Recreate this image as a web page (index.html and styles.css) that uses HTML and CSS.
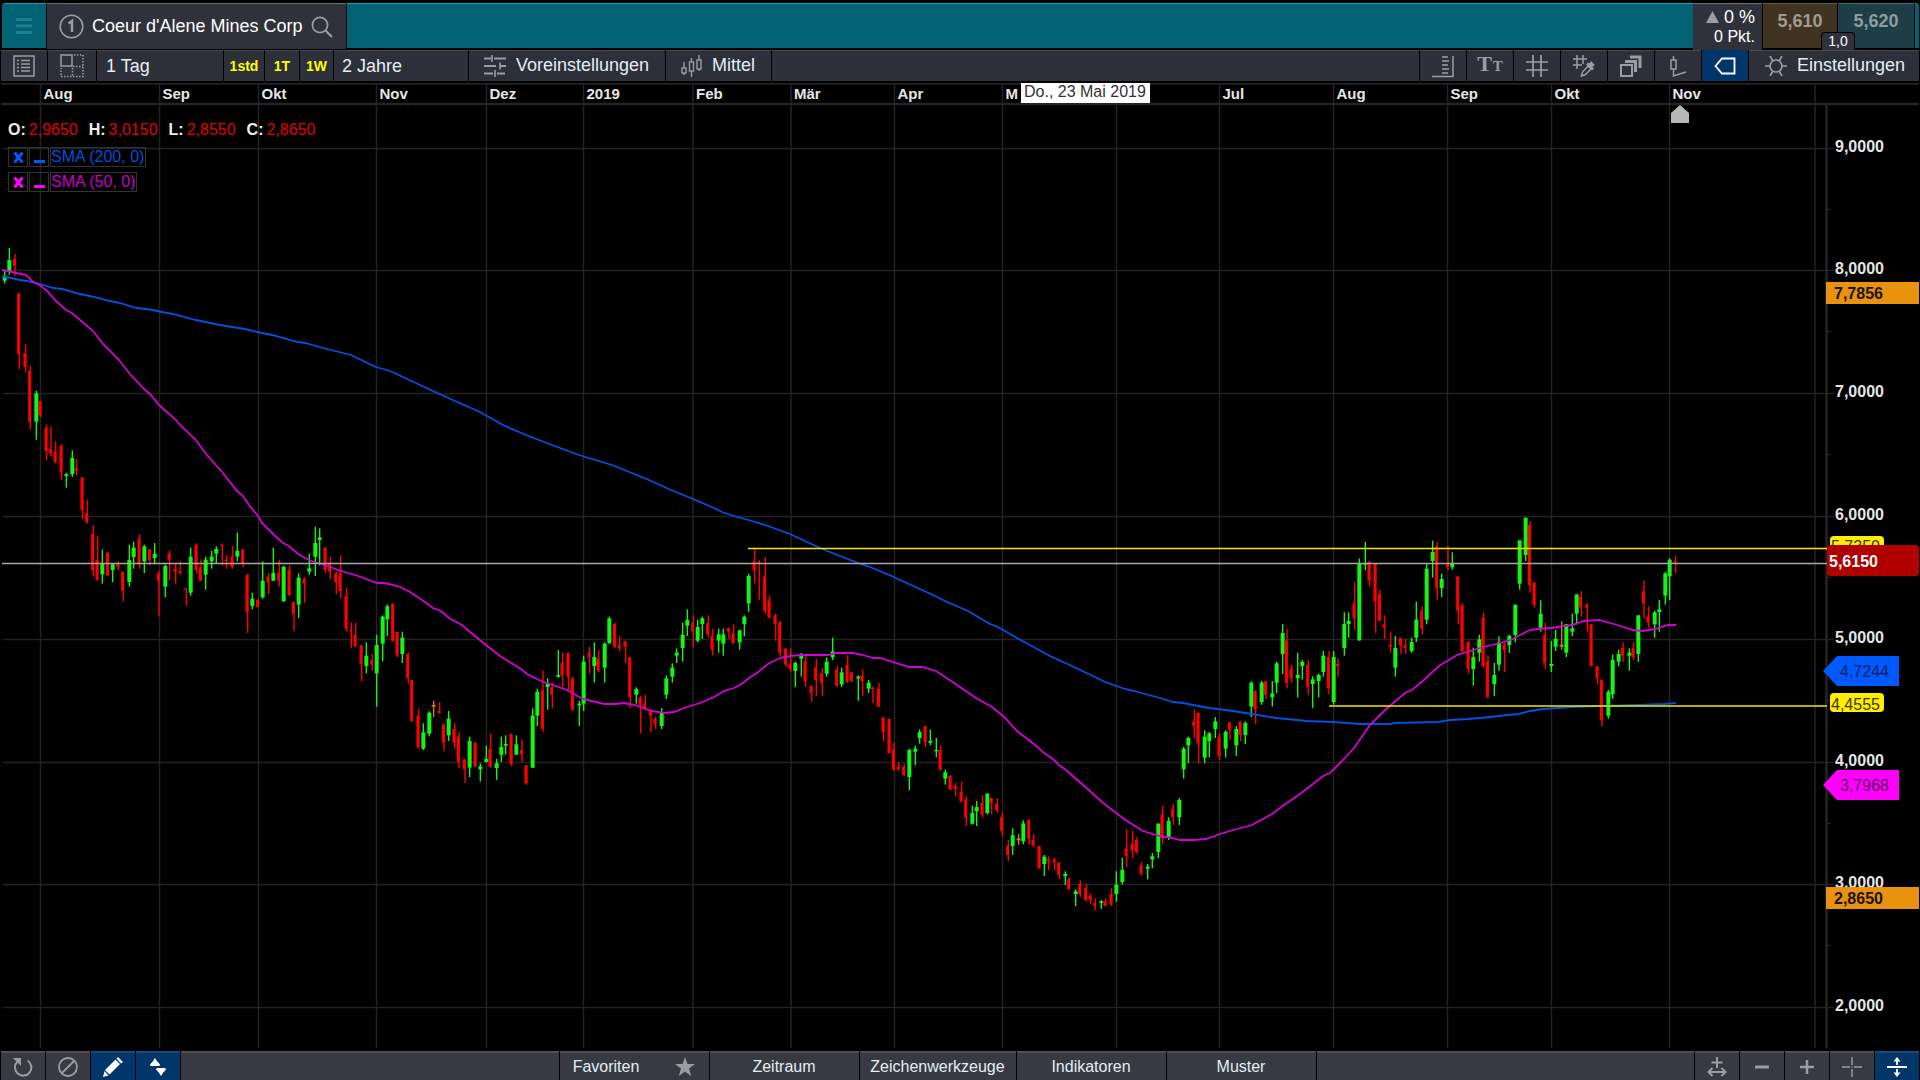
FILE: index.html
```html
<!DOCTYPE html>
<html lang="de">

<head>
    <meta charset="utf-8">
    <title>Coeur d'Alene Mines Corp</title>
    <link rel="stylesheet" href="styles.css">
</head>

<body>
    <header class="titlebar">
        <button class="menu" aria-label="Menü">
            <svg width="16" height="16" viewBox="0 0 16 16"><path d="M0 1.500H16M0 8H16M0 14.500H16" stroke="#1e7f8f" stroke-width="3"/></svg>
        </button>
        <button class="instrument">
            <svg width="25" height="25" viewBox="0 0 25 25" fill="none" stroke="#9a9da1"><circle cx="12.500" cy="12.500" r="11.300" stroke-width="1.600"/><path d="M9.500 9.500L13 7V18" stroke-width="2.500"/></svg>
            <span>Coeur d'Alene Mines Corp</span>
            <svg width="22" height="22" viewBox="0 0 22 22" fill="none" stroke="#9a9da1" stroke-width="1.700"><circle cx="9" cy="9" r="7.600"/><path d="M14.500 14.500L21 21" stroke-width="2.200"/></svg>
        </button>
        <div class="brand"></div>
        <div class="change">
            <div><svg width="13" height="12" viewBox="0 0 13 12"><path d="M6.500 0L13 12H0Z" fill="#9a9da1"/></svg> 0 %</div>
            <div class="points">0 Pkt.</div>
        </div>
        <div class="quote">
            <button class="bid">5,610</button>
            <button class="ask">5,620</button>
            <span class="spread">1,0</span>
        </div>
        <div class="edge"></div>
    </header>

    <nav class="toolbar">
        <button class="icon" aria-label="Liste">
            <svg width="22" height="22" viewBox="0 0 22 22" fill="none" stroke="#9a9da1" stroke-width="1.500"><rect x="1" y="1" width="20" height="20"/><path d="M4 5.500H6M8 5.500H17M4 9H6M8 9H17M4 12.500H6M8 12.500H17M4 16H6M8 16H17"/></svg>
        </button>
        <button class="icon layout" aria-label="Layout">
            <svg width="24" height="24" viewBox="0 0 24 24" fill="none" stroke="#9a9da1" stroke-width="1.500"><rect x="1" y="1" width="11" height="11"/><path stroke-dasharray="1.500 1.500" d="M14 1H23V22.500H1V14M13 12.500H23M12.500 14V22"/></svg>
        </button>
        <select class="interval" aria-label="Intervall"><option>1 Tag</option></select>
        <button class="quick hour">1std</button>
        <button class="quick">1T</button>
        <button class="quick week">1W</button>
        <select class="period" aria-label="Zeitspanne"><option>2 Jahre</option></select>
        <button class="presets">
            <svg width="22" height="22" viewBox="0 0 22 22" fill="none" stroke="#9a9da1" stroke-width="2"><path d="M0 3.500H7M10 3.500H22M0 11H12M16 11H22M0 18.500H9M13 18.500H21"/><path d="M8 0V7M16 7.500V14.500M11 15V22" stroke-width="1.600"/></svg>
            Voreinstellungen
        </button>
        <button class="style">
            <svg width="22" height="22" viewBox="0 0 22 22" fill="none" stroke="#9a9da1" stroke-width="1.400"><rect x="1" y="13" width="4" height="5"/><path d="M3 7V13M3 18V20M10.500 3V7M10.500 16V22M18 0V5M18 14V16"/><rect x="8.500" y="7" width="4" height="9"/><rect x="16" y="5" width="4" height="9"/></svg>
            Mittel
        </button>
        <span class="space"></span>
        <button class="icon" aria-label="Skala">
            <svg width="24" height="24" viewBox="0 0 24 24" fill="none" stroke="#9a9da1" stroke-width="1.500"><path d="M1 22.500H22V2M11 3H17M11 7H18M11 11H17M11 15H18M11 19H17"/></svg>
        </button>
        <button class="icon letters" aria-label="Schrift"><b>T</b><b class="small">T</b></button>
        <button class="icon" aria-label="Gitter">
            <svg width="22" height="22" viewBox="0 0 22 22" stroke="#9a9da1" stroke-width="1.700"><path d="M7 0V22M15 0V22M0 7H22M0 15H22"/></svg>
        </button>
        <button class="icon" aria-label="Gitterfarbe">
            <svg width="22" height="22" viewBox="0 0 22 22" fill="none" stroke="#9a9da1" stroke-width="1.500"><path d="M4 0V14M10 0V9M0 4H14M0 10H9"/><path d="M8.500 21L9.500 17L15 11L18 14L12.500 19.500Z"/><path d="M14 8.500L20 14.500" stroke-width="2.500"/><path d="M17 11L20 8" stroke-width="5"/></svg>
        </button>
        <button class="icon" aria-label="Ebenen">
            <svg width="22" height="22" viewBox="0 0 22 22" fill="none" stroke="#9a9da1"><rect x="1" y="10" width="11" height="11" stroke-width="2"/><path d="M5 6.500H15.500V17M10 2H20V13" stroke-width="3"/></svg>
        </button>
        <button class="icon" aria-label="Kerze">
            <svg width="22" height="22" viewBox="0 0 22 22" fill="none" stroke="#9a9da1" stroke-width="1.500"><rect x="4" y="5" width="5" height="9"/><path d="M6.500 1V5M6.500 14V21L19 17"/></svg>
        </button>
        <button class="icon active" aria-label="Preismarke">
            <svg width="22" height="18" viewBox="0 0 22 18" fill="none" stroke="#fff" stroke-width="1.800"><path d="M1.500 9L8 1.500H20.500V16.500H8Z"/></svg>
        </button>
        <button class="settings">
            <svg width="22" height="20" viewBox="0 0 22 20" fill="none" stroke="#9a9da1" stroke-width="1.700"><circle cx="11" cy="10" r="6"/><path d="M0 10H5M17 10H22M5 0L8 5M17 0L14 5M5 20L8 15M17 20L14 15"/></svg>
            Einstellungen
        </button>
    </nav>

    <main class="chart">
        <svg class="plot" viewBox="0 83 1920 968" preserveAspectRatio="xMinYMin meet">
            <g id="grid"></g>
            <g id="candles"></g>
            <g id="averages"></g>
            <g id="levels">
                <path class="current" d="M2 563.500H1827"/>
                <path class="level" d="M748 548.500H1827M1329 706H1827"/>
            </g>
            <g id="labels"></g>
            <g id="tags"></g>
        </svg>
        <div class="legend">
            <div class="ohlc">
                <span><b>O:</b>2,9650</span>
                <span><b>H:</b>3,0150</span>
                <span><b>L:</b>2,8550</span>
                <span><b>C:</b>2,8650</span>
            </div>
            <div class="indicator sma200">
                <button aria-label="SMA 200 entfernen"><svg width="11" height="11" viewBox="0 0 11 11"><path d="M1.500 0.500L9.500 10.500M9.500 0.500L1.500 10.500" stroke="currentColor" stroke-width="3"/></svg></button>
                <button aria-label="SMA 200 minimieren"><svg width="11" height="11" viewBox="0 0 11 11"><path d="M0 9.500H11" stroke="currentColor" stroke-width="3"/></svg></button>
                <button class="name">SMA (200, 0)</button>
            </div>
            <div class="indicator sma50">
                <button aria-label="SMA 50 entfernen"><svg width="11" height="11" viewBox="0 0 11 11"><path d="M1.500 0.500L9.500 10.500M9.500 0.500L1.500 10.500" stroke="currentColor" stroke-width="3"/></svg></button>
                <button aria-label="SMA 50 minimieren"><svg width="11" height="11" viewBox="0 0 11 11"><path d="M0 9.500H11" stroke="currentColor" stroke-width="3"/></svg></button>
                <button class="name">SMA (50, 0)</button>
            </div>
        </div>
    </main>

    <footer class="bottombar">
        <button class="tool" aria-label="Zurücksetzen">
            <svg width="20" height="20" viewBox="0 0 20 20" fill="none" stroke="#9a9da1" stroke-width="2"><path d="M4.500 4.500A8.200 8.200 0 1 0 14.500 3.500"/><path d="M0 1H8V9Z" fill="#9a9da1" stroke="none"/></svg>
        </button>
        <button class="tool" aria-label="Aus">
            <svg width="20" height="20" viewBox="0 0 20 20" fill="none" stroke="#9a9da1" stroke-width="1.800"><circle cx="10" cy="10" r="9"/><path d="M16.500 3.500L3.500 16.500"/></svg>
        </button>
        <button class="tool active" aria-label="Zeichnen">
            <svg width="20" height="20" viewBox="0 0 20 20" fill="#fff"><path d="M0 20L1.500 14L5.500 18.500ZM2 13L12.500 2.500L17 7L6.500 17.500ZM13.500 1.500L15 0L20 5L18 6.500Z"/></svg>
        </button>
        <button class="tool active" aria-label="Sortieren">
            <svg width="16" height="18" viewBox="0 0 16 18" fill="#fff"><path d="M5 0Q6.500 3 10 6.500Q10 8 8.500 8H1.500Q0 8 0 6.500Q3.500 3 5 0ZM11 18Q9.500 15 6 11.500Q6 10 7.500 10H14.500Q16 10 16 11.500Q12.500 15 11 18Z"/></svg>
        </button>
        <span class="space"></span>
        <button class="tab favorites">Favoriten
            <svg width="20" height="19" viewBox="0 0 20 19" fill="#9a9da1"><path d="M10 0L12.400 7H20L14 11.500L16.200 19L10 14.500L3.800 19L6 11.500L0 7H7.600Z"/></svg>
        </button>
        <button class="tab">Zeitraum</button>
        <button class="tab wide">Zeichenwerkzeuge</button>
        <button class="tab">Indikatoren</button>
        <button class="tab">Muster</button>
        <span class="space"></span>
        <button class="tool" aria-label="Breite">
            <svg width="20" height="20" viewBox="0 0 20 20" fill="none" stroke="#9a9da1" stroke-width="2"><path d="M10 0V11M4.500 5.500H15.500M1.500 15H18.500M5.500 11L1.500 15L5.500 19M14.500 11L18.500 15L14.500 19"/></svg>
        </button>
        <button class="tool" aria-label="Verkleinern">
            <svg width="16" height="16" viewBox="0 0 16 16" stroke="#9a9da1" stroke-width="3"><path d="M1 8H15"/></svg>
        </button>
        <button class="tool" aria-label="Vergrößern">
            <svg width="16" height="16" viewBox="0 0 16 16" stroke="#9a9da1" stroke-width="2.500"><path d="M1 8H15M8 1V15"/></svg>
        </button>
        <button class="tool" aria-label="Fadenkreuz">
            <svg width="20" height="20" viewBox="0 0 20 20" stroke="#9a9da1" stroke-width="1.400"><path d="M0 10H8M12 10H20M10 0V8M10 12V20M9.500 10H10.500"/></svg>
        </button>
        <button class="tool active" aria-label="Höhe anpassen">
            <svg width="20" height="20" viewBox="0 0 20 20" fill="#fff" stroke="#fff" stroke-width="1.800"><path d="M0 10H20M10 2V8M10 12V18"/><path d="M10 0L13.500 4.500H6.500ZM10 20L13.500 15.500H6.500Z" stroke="none"/></svg>
        </button>
    </footer>

    <script src="chart.js"></script>
</body>

</html>
```
FILE: styles.css
```css
* {
    box-sizing: border-box;
}

html, body {
    height: 100%;
    margin: 0;
}

body {
    display: flex;
    flex-direction: column;
    background: #000;
    color: #fff;
    font-family: "Liberation Sans", Arial, sans-serif;
    font-size: 18px;
    overflow: hidden;
}

button, select {
    margin: 0;
    padding: 0;
    border: 0;
    border-radius: 0;
    background: none;
    color: inherit;
    font: inherit;
    appearance: none;
}

svg {
    display: block;
    flex-shrink: 0;
}

/* Title bar */
.titlebar {
    display: flex;
    height: 50px;
    padding: 3px 1px 2px 2px;
}

.menu {
    display: flex;
    align-items: center;
    justify-content: center;
    width: 44px;
    margin-right: 1px;
    background: #006272;
    border-top: 1px solid #0aa5bd;
    border-top-left-radius: 4px;
}

.instrument {
    display: flex;
    align-items: center;
    gap: 8px;
    height: 46px;
    padding: 0 13px 0 12px;
    background: #2f323a;
    border-top: 1px solid #6d7075;
}

.brand {
    flex: 1;
    margin-left: 1px;
    background: #006272;
    border-top: 1px solid #0aa5bd;
}

.change {
    width: 69px;
    height: 47px;
    padding: 3px 7px 0 0;
    background: #2f323a;
    border-top: 1px solid #6d7075;
    line-height: 20px;
    text-align: right;
}

.change svg {
    display: inline-block;
}

.points {
    font-size: 16px;
}

.quote {
    display: flex;
    position: relative;
    gap: 1px;
    margin: 0 1px;
}

.bid, .ask {
    padding-bottom: 9px;
    font-weight: bold;
}

.bid {
    width: 74px;
    background: #413322;
    border-top: 1px solid #6b5a42;
    color: #a09a90;
}

.ask {
    width: 76px;
    background: #1d3e47;
    border-top: 1px solid #4a6a72;
    color: #8c9ca0;
}

.spread {
    position: absolute;
    bottom: -2px;
    left: 58px;
    width: 34px;
    height: 18px;
    background: #2f323a;
    border: 1px solid #000;
    border-bottom: 0;
    border-radius: 4px 4px 0 0;
    font-size: 14px;
    line-height: 17px;
    text-align: center;
}

.edge {
    width: 4px;
    background: #006272;
    border-top: 1px solid #0aa5bd;
    border-top-right-radius: 4px;
}

/* Toolbar */
.toolbar {
    display: flex;
    gap: 1px;
    height: 33px;
    padding: 0 1px 2px 1px;
    color: #e4edf5;
}

.toolbar > * {
    display: flex;
    align-items: center;
    padding-bottom: 1px;
    background: #2d3038;
    border-top: 1px solid #484b50;
}

.icon {
    justify-content: center;
    width: 46px;
}

.layout {
    width: 48px;
}

.interval {
    width: 126px;
    padding-left: 9px;
}

.quick {
    justify-content: center;
    width: 34px;
    color: #ff0;
    font-size: 14px;
    font-weight: bold;
}

.quick.hour {
    width: 40px;
}

.quick.week {
    width: 33px;
}

.period {
    width: 134px;
    padding-left: 8px;
}

.presets {
    gap: 10px;
    width: 196px;
    padding-left: 15px;
}

.style {
    gap: 9px;
    width: 105px;
    padding-left: 15px;
}

.space {
    flex: 1;
}

.letters {
    align-items: baseline;
    gap: 1px;
    color: #9a9da1;
    font-family: "Liberation Serif", serif;
    font-size: 22px;
}

.letters .small {
    font-size: 15px;
}

.settings {
    gap: 10px;
    width: 170px;
    padding-left: 16px;
}

.toolbar .active {
    background: #00366a;
    border-top-color: #00366a;
}

/* Chart */
.chart {
    flex: 1;
    position: relative;
    min-height: 0;
}

.plot {
    width: 100%;
    height: 100%;
    font-size: 16px;
}

.grid-line {
    fill: none;
    stroke: #222;
    stroke-width: 1.5px;
}

.axis-line {
    fill: none;
    stroke: #242424;
    stroke-width: 2.5px;
}

.month, .price {
    fill: #e6e6e6;
    font-weight: bold;
}

.month {
    font-size: 15px;
}

.up {
    fill: #14f514;
}

.down {
    fill: #ff0000;
}

.flat {
    fill: #c87e14;
}

.average {
    fill: none;
    stroke-width: 1.8px;
}

.average.sma200 {
    stroke: #0052e0;
}

.average.sma50 {
    stroke: #d400d4;
}

.current {
    fill: none;
    stroke: #a8a8a8;
    stroke-width: 1.6px;
}

.level {
    fill: none;
    stroke: #f5e600;
    stroke-width: 1.6px;
}

.legend {
    position: absolute;
    top: 37px;
    left: 8px;
    font-size: 16px;
}

.ohlc {
    display: flex;
    gap: 11px;
    height: 27px;
    color: #e00000;
    line-height: 19px;
}

.ohlc b {
    margin-right: 3px;
    color: #eee;
}

.indicator {
    display: flex;
    gap: 1px;
    margin-bottom: 5px;
}

.indicator button {
    display: flex;
    align-items: center;
    justify-content: center;
    width: 20px;
    height: 20px;
    border: 1px solid #333;
}

.indicator .name {
    width: auto;
    padding: 0 1px 0 0;
}

.indicator.sma200 {
    color: #0058ff;
}

.indicator.sma50 {
    color: #f0f;
}

.indicator.sma200 .name {
    color: #004fd8;
}

.indicator.sma50 .name {
    color: #c800c8;
}

/* Bottom bar */
.bottombar {
    display: flex;
    gap: 1px;
    height: 29px;
    padding: 0 1px;
    color: #e4edf5;
    font-size: 16px;
}

.bottombar > * {
    display: flex;
    align-items: center;
    justify-content: center;
    background: #373a40;
    border-top: 2px solid #4d5055;
}

.tool {
    width: 44px;
}

.bottombar .active {
    background: #00366a;
    border-top-color: #1a4a7a;
}

.tab {
    width: 149px;
}

.tab.wide {
    width: 156px;
}

.favorites {
    gap: 36px;
}
```
FILE: chart.js
```js
var SVG = "http://www.w3.org/2000/svg";

function add(parent, tag, attrs, text) {
    var el = document.createElementNS(SVG, tag);
    for (var key in attrs) {
        el.setAttribute(key, attrs[key]);
    }
    if (text) {
        el.textContent = text;
    }
    document.getElementById(parent).appendChild(el);
    return el;
}

// Months: grid x, label (May is cut short by the cursor date)
var months = [
    [40.5, "Aug"], [159.5, "Sep"], [258.5, "Okt"], [376.5, "Nov"], [486.5, "Dez"],
    [583.5, "2019"], [693, "Feb"], [791, "Mär"], [894.5, "Apr"], [1002.5, "M"],
    [1116.5, ""], [1219.5, "Jul"], [1333.5, "Aug"], [1447.5, "Sep"], [1551.5, "Okt"],
    [1669.5, "Nov"], [1815, ""]
];

months.forEach(function (m) {
    add("grid", "path", { class: "grid-line", d: "M" + m[0] + " 84V1048" });
    if (m[1]) {
        add("labels", "text", { class: "month", x: m[0] + 3, y: 99 }, m[1]);
    }
});

// Prices: 9 at the top down to 2
for (var price = 9; price >= 2; price--) {
    var y = Math.floor(148 + (9 - price) * 122.8) + 0.5;
    add("grid", "path", { class: "grid-line", d: "M3 " + y + "H1834" });
    add("grid", "path", { class: "grid-line", d: "M1827 " + (y + 61) + "h4" });
    add("labels", "text", { class: "price", x: 1835, y: y + 3.5 }, price + ",0000");
}
add("grid", "path", { class: "axis-line", d: "M1 83.5H1919M1 104H1919M1826.5 105V1048" });
add("labels", "path", { d: "M1671 123V113L1680 105L1689 113V123Z", fill: "#b8b8b8" });

// Bars: x, high, low, body top, body bottom, kind. Three units are one pixel, from the block's origin.
var blocks = [
    { x: 0, y: 230, bars: `
14 122 160 138 152 g|28 54 134 90 124 g|45 72 138 86 108 r|58 188 417 190 373 r|77 342 427 369 412 r
91 408 598 422 575 r|109 482 629 490 575 g|122 513 562 513 556 r|140 585 691 594 664 r|153 590 678 657 670 r
167 634 700 665 697 r|185 643 750 647 728 r|199 728 773 733 738 g|217 661 741 684 732 g|230 688 737 715 722 r
248 742 867 742 840 r|262 809 880 850 877 r|280 886 1039 912 1021 r|293 917 1052 990 1050 r|307 958 1061 1000 1033 g
324 966 1038 968 1036 r|338 1000 1056 1003 1020 g|355 994 1021 1003 1010 r|370 1024 1114 1025 1083 r|388 944 1070 990 1056 g
401 935 1016 953 981 g|419 912 1016 926 1000 r|433 944 1029 949 994 g|450 958 1006 958 990 r|464 939 1000 971 984 g
477 1022 1159 1030 1052 r|496 1003 1102 1008 1070 g|509 962 1052 971 990 r|527 1000 1061 1016 1025 r|541 994 1034 1024 1029 r
559 1074 1128 1075 1079 r|572 953 1097 980 1088 g|590 940 1029 944 1020 r|603 988 1053 1012 1052 r|617 980 1079 989 1034 g
635 962 1016 980 994 g|649 949 1000 957 971 g|667 940 1007 944 948 r|680 975 1016 989 993 r|698 948 1016 980 1012 r
712 908 994 962 980 g|730 957 1012 958 1000 r|743 1033 1209 1034 1147 r|757 1088 1138 1106 1128 g|775 1105 1132 1110 1131 r
788 994 1106 1052 1102 g|806 1030 1092 1040 1057 r|820 953 1053 1029 1052 g|838 989 1070 1029 1052 r|851 1007 1115 1011 1114 g
869 1006 1097 1021 1096 r|882 1115 1204 1116 1151 r|896 1030 1164 1043 1124 g|914 1042 1119 1047 1061 r|928 971 1034 1015 1025 g
946 890 1038 939 980 g|959 895 1006 922 930 g|977 952 1029 953 1020 r|991 980 1047 998 1025 r|1009 1025 1092 1030 1056 r
1022 976 1106 1030 1083 r|1040 1074 1204 1097 1195 r|1054 1178 1254 1200 1204 r|1067 1178 1250 1214 1249 r|1085 1245 1353 1246 1303 r
1099 1237 1330 1277 1308 g|1117 1272 1322 1290 1303 r|1130 1214 1430 1245 1330 g|1148 1156 1294 1160 1241 g|1162 1124 1218 1129 1168 g
1180 1120 1236 1121 1232 r|1193 1205 1281 1206 1276 r|1207 1205 1299 1223 1272 g|1225 1268 1361 1272 1344 r` },
    { x: 320, y: 500, bars: `
277 540 664 540 664 r|296 628 746 647 742 r|310 670 750 697 746 g|328 634 709 638 701 g|341 602 651 615 620 o
359 606 641 633 638 r|372 670 754 674 728 r|386 633 723 656 706 g|404 670 746 687 728 r|417 697 804 710 786 r
435 777 849 778 808 r|449 710 831 723 803 g|467 728 801 728 799 r|481 790 844 799 808 g|499 737 787 777 786 g
512 701 803 746 800 r|530 777 840 790 804 g|544 710 786 741 764 g|557 706 764 732 737 g|575 701 799 702 792 r
589 706 764 733 764 g|606 718 786 750 763 r|620 795 854 796 850 r|638 625 804 647 803 g|652 566 678 575 647 g
669 512 696 571 687 r|683 535 629 551 561 g|697 548 624 562 584 r|715 450 533 525 530 g|728 458 562 489 526 r
746 458 572 459 530 r|759 530 633 536 629 r|778 602 678 611 616 g|791 467 633 485 611 g|809 440 521 458 472 r
823 427 548 471 498 g|836 450 516 476 512 r|854 427 548 431 503 g|868 350 431 355 430 g|885 368 444 372 440 r
899 408 453 436 444 r|917 422 489 424 440 r|931 471 624 472 592 r|949 562 611 567 584 g|962 588 700 593 615 r
976 584 629 610 624 r|993 629 696 632 647 r|1007 650 687 656 674 r|1025 624 687 638 678 g|1039 526 597 535 584 g
1057 490 548 503 530 g|1070 445 489 458 467 g|1088 368 485 404 444 g|1102 328 408 360 377 g|1120 346 440 368 395 r
1133 359 427 381 422 g|1147 350 417 355 372 g|1165 346 413 369 404 r|1178 386 467 408 449 r|1196 386 458 403 422 g
1210 386 467 403 431 g|1227 382 417 385 395 r|1241 373 431 400 430 r|1259 390 449 391 427 g|1273 346 409 350 372 g
1286 221 336 228 310 g|1304 145 250 184 211 r|1318 180 300 186 190 r|1336 171 341 229 332 r|1349 287 355 301 353 r
1367 341 422 346 372 r|1381 363 467 367 458 r` },
    { x: 720, y: 520, bars: `
198 385 442 386 433 r|212 385 456 433 448 r|226 425 501 429 453 g|244 399 470 403 416 g|257 406 501 424 484 r
275 497 546 498 519 r|289 416 528 442 480 r|307 444 528 460 489 r|320 412 470 425 461 g|338 353 420 394 412 g
352 438 501 448 497 r|365 443 501 457 493 g|383 406 488 435 487 r|396 457 484 457 484 r|415 466 542 470 475 g
428 448 528 467 484 r|446 480 519 488 506 g|459 501 550 503 507 r|477 488 560 506 560 r|491 592 663 592 636 r
509 596 700 597 699 r|522 667 752 690 748 r|536 727 752 740 748 r|553 732 768 740 766 r|568 686 811 690 771 g
586 677 735 686 695 g|599 628 671 636 654 g|617 618 681 619 667 r|631 628 676 663 668 g|649 654 712 690 694 g
662 676 752 690 748 r|676 749 794 757 776 g|692 766 811 767 808 r|707 789 829 798 807 r|725 785 847 816 844 r
739 829 918 838 893 r|757 857 914 879 911 g|770 843 918 861 874 g|788 825 892 848 884 r|802 820 883 821 879 g
815 834 883 834 848 r|832 834 879 852 870 r|847 875 950 892 933 r|865 960 1023 978 1005 r|878 925 1005 946 978 g
896 942 974 955 961 o|910 901 973 910 964 g|928 897 973 901 956 r|941 942 982 960 976 r|959 978 1046 978 1045 r
973 1005 1068 1010 1032 g|986 1009 1050 1018 1023 r|1004 1014 1050 1018 1027 r|1018 1027 1077 1028 1064 r|1036 1054 1095 1062 1068 g
1048 1073 1108 1077 1108 r|1067 1108 1158 1114 1122 g|1081 1081 1131 1092 1122 r|1099 1091 1144 1104 1140 r|1112 1121 1153 1127 1140 r
1126 1135 1171 1149 1158 r|1144 1140 1167 1144 1149 g|1157 1135 1159 1144 1158 r|1175 1104 1158 1122 1153 r|1189 1054 1145 1094 1122 g` },
    { x: 1080, y: 540, bars: `
127 953 1034 990 1026 g|140 868 981 926 949 r|158 873 954 912 932 r|171 891 941 900 936 r|185 966 1007 976 1000 r
203 972 1018 980 986 g|217 939 985 949 958 g|235 850 954 851 936 g|248 797 913 824 895 r|266 832 900 842 892 g
280 792 855 806 832 r|298 774 855 780 832 g|311 621 716 626 688 g|325 590 670 594 616 g|343 508 594 544 557 r
356 517 670 519 611 r|374 571 670 590 653 g|388 576 652 580 603 g|406 531 594 544 567 g|419 580 661 590 648 r
437 571 652 576 626 g|450 545 599 548 571 r|469 558 648 567 616 g|482 545 603 545 585 r|496 544 612 549 585 g
514 424 531 428 500 g|527 450 553 454 508 r|545 423 494 428 486 g|558 423 477 424 464 r|577 423 500 460 472 g
590 365 459 370 428 g|608 252 402 279 342 g|621 266 445 301 428 r|635 374 428 387 414 r|653 338 472 405 414 g
667 360 419 366 378 g|685 360 464 374 441 r|698 409 504 418 432 g|716 401 472 405 423 g|730 333 410 347 396 g
747 333 463 351 445 r|761 333 494 351 486 g|774 356 410 372 378 r|793 217 347 252 324 g|806 217 293 243 252 g
824 127 270 190 235 r|838 55 302 72 301 g|856 5 91 70 74 g|869 64 140 65 122 r|887 71 279 72 185 r
900 149 243 163 243 r|914 226 297 253 262 r|932 275 338 314 320 r|946 288 410 324 383 g|963 293 342 294 316 r
977 297 342 316 324 r|995 293 338 306 333 g|1009 185 306 239 293 g|1027 199 284 212 266 r` },
    { x: 1400, y: 500, bars: `
80 190 373 206 359 g|98 122 233 156 183 g|112 126 300 138 265 r|125 221 291 237 264 g|144 138 210 190 202 r
157 157 209 192 202 g|175 229 373 229 332 r|188 310 458 317 454 r|206 422 520 426 507 r|220 443 557 471 507 g
238 404 485 418 458 g|251 337 503 354 498 r|264 467 593 485 592 r|283 489 588 525 552 g|297 409 512 426 494 g
314 426 516 434 450 r|328 404 458 408 435 g|346 314 427 314 405 g|359 121 269 121 251 g|377 53 183 53 165 g
390 63 278 75 255 r|404 247 322 247 314 r|422 301 395 341 383 g|436 368 507 404 490 r|454 423 516 492 498 g
467 390 453 417 440 g|485 364 449 434 440 o|499 373 471 373 458 g|517 341 408 385 395 g|530 283 373 283 341 g
544 274 350 290 323 r|562 310 395 314 323 r|575 372 498 373 498 r|593 499 552 499 534 r|606 539 679 539 661 r
625 570 656 575 647 g|638 463 597 480 583 g|656 449 499 462 485 g|669 427 485 444 467 r|688 445 512 458 467 g
701 427 480 444 472 r|715 346 485 346 462 g|732 242 355 274 310 r|746 319 382 350 368 r|764 332 413 337 373 g
778 300 395 328 336 g|796 216 314 220 287 g|809 175 300 179 229 g|827 166 220 184 192 r` }
];

var kinds = { g: "up", r: "down", o: "flat" };

blocks.forEach(function (block) {
    block.bars.trim().split(/[|\n]/).forEach(function (bar) {
        var v = bar.split(" ");
        var kind = kinds[v[5]];
        var x = block.x + v[0] / 3;
        var width = kind == "down" ? 3 : 4;
        // falling bars have their body one pixel left of the wick
        var left = kind == "down" ? x - 2.2 : x - 2;
        add("candles", "rect", {
            class: kind, x: x - 0.7, y: block.y + v[1] / 3, width: 1.4, height: (v[2] - v[1]) / 3
        });
        add("candles", "rect", {
            class: kind, x: left, y: block.y + v[3] / 3, width: width, height: Math.max((v[4] - v[3]) / 3, 1.3)
        });
    });
});

add("averages", "polyline", { class: "average sma200", points: "2,276 11,278 20,280 27,281 40,284 53,288 62,289 80,294 90,296 110,301 120,303 137,308 153,310 162,312 173,314 196,320 220,325 232,327 245,329 262,333 272,335 298,342 305,343 323,348 331,350 351,355 357,358 376,367 390,371 403,377 433,391 455,401 480,412 503,425 526,435 552,445 579,455 612,465 649,480 671,490 693,499 714,508 722,512 734,516 752,521 765,525 790,534 820,548 840,556 858,563 870,567 894,577 900,580 933,595 945,601 968,611 990,624 998,627 1017,638 1030,645 1050,656 1074,667 1095,677 1105,682 1125,689 1134,691 1160,698 1173,702 1183,703 1193,705 1209,708 1226,710 1252,714 1276,718 1307,721 1333,722 1360,724 1390,724 1395,723 1438,722 1450,720 1468,719 1490,717 1508,715 1518,714 1530,711 1543,709 1572,707 1600,706 1640,705 1665,704 1676,703" });
add("averages", "polyline", { class: "average sma50", points: "2,270 12,272 26,275 32,281 41,286 48,292 56,301 66,310 72,313 93,331 103,344 119,360 130,374 144,389 150,394 159,405 176,420 180,425 196,440 206,454 223,473 237,491 243,496 249,505 258,516 262,523 274,535 283,543 289,546 298,554 311,561 325,565 338,570 361,577 377,583 384,583 398,586 410,592 425,602 433,608 441,611 449,618 462,625 470,632 486,645 500,656 521,669 527,674 541,681 567,690 583,699 604,704 616,704 624,703 635,705 643,708 652,711 665,713 674,712 684,708 700,703 714,697 724,691 734,688 743,683 749,678 757,673 768,664 780,658 790,656 802,655 828,655 836,653 853,653 863,655 873,658 880,658 909,667 922,667 936,671 957,685 976,698 992,707 1003,716 1008,721 1017,731 1034,744 1044,753 1054,760 1059,765 1066,770 1082,784 1102,802 1116,813 1127,821 1143,831 1160,836 1172,838 1180,840 1193,840 1206,839 1220,834 1237,829 1252,825 1272,814 1284,805 1300,794 1313,784 1323,776 1330,773 1344,759 1354,748 1370,725 1384,711 1392,704 1405,693 1412,690 1424,680 1439,666 1457,655 1480,648 1511,640 1518,636 1530,630 1537,629 1551,628 1572,625 1584,621 1599,620 1617,625 1633,630 1643,631 1655,629 1668,625 1676,625" });

// Tags on the price axis and the date under the cursor
function tag(shape, fill, x, y, text, color, weight) {
    add("tags", "path", { d: shape, fill: fill });
    add("tags", "text", { x: x, y: y, fill: color, "font-weight": weight || "normal" }, text);
}

var rounded = "h46a4 4 0 0 1 4 4v11a4 4 0 0 1 -4 4h-46a4 4 0 0 1 -4 -4v-11a4 4 0 0 1 4 -4Z";

function arrowTag(y, fill, text, color) {
    tag("M1823 " + y + "L1837 " + (y - 15) + "H1899V" + (y + 15) + "H1837Z", fill, 1840, y + 6, text, color);
}

tag("M1826 282h93v22h-93Z", "#e8920e", 1834, 299, "7,7856", "#1c1200", "bold");
tag("M1826 887h93v22h-93Z", "#e8920e", 1834, 904, "2,8650", "#1c1200", "bold");
tag("M1834 536" + rounded, "#ffee00", 1831, 552, "5,7350", "#3c3800");
tag("M1834 693" + rounded, "#ffee00", 1831, 710, "4,4555", "#3c3800");
tag("M1829 545h88l2 2v27l-2 2h-88l-2 -2v-27Z", "#b00000", 1829, 567, "5,6150", "#fff", "bold");
arrowTag(671, "#0058ff", "4,7244", "#00205c");
arrowTag(785, "#ff00ff", "3,7968", "#5c005c");
tag("M1021 83h129v20h-129Z", "#fff", 1024, 97, "Do., 23 Mai 2019", "#333");
```
